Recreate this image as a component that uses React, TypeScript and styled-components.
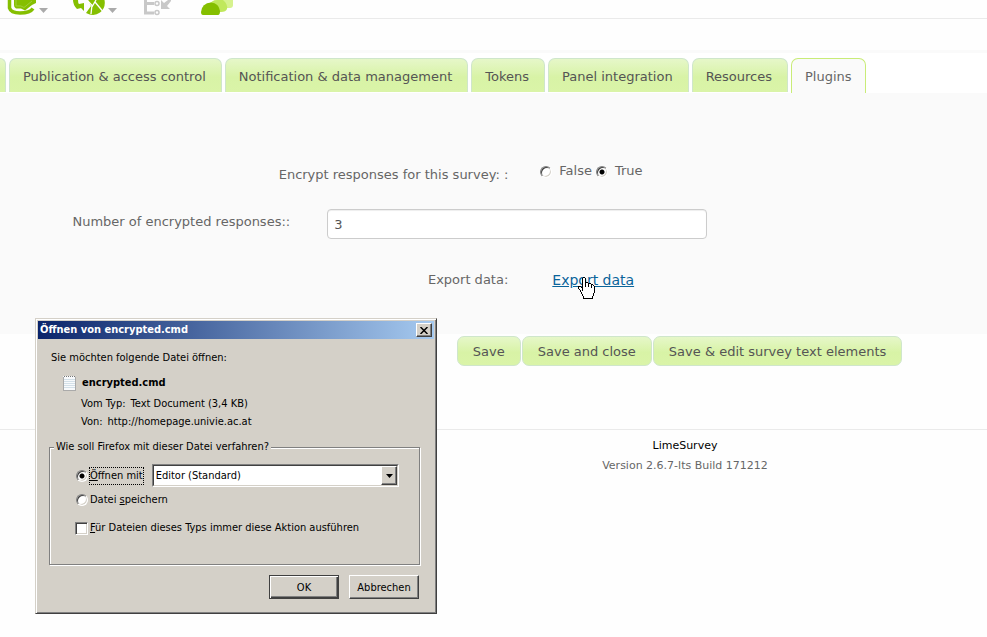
import React from "react";
import styled, { createGlobalStyle, css } from "styled-components";

const Global = createGlobalStyle`
  *, *::before, *::after { box-sizing: border-box; }
  body {
    margin: 0;
    background: #fefefe;
    color: #666;
    font-family: "DejaVu Sans", Verdana, sans-serif;
    font-size: 13px;
  }
`;

const Page = styled.div`
  position: relative;
  min-height: 100vh;
  overflow: hidden;
`;

const Toolbar = styled.header`
  display: flex;
  align-items: flex-end;
  height: 19px;
  padding-left: 7px;
  border-bottom: 1px solid #eaeaea;
`;

const Tool = styled.button<{ $gap: number }>`
  display: flex;
  align-items: flex-end;
  gap: 3px;
  height: 18px;
  margin: 0 ${(p) => p.$gap}px 0 0;
  padding: 0;
  border: 0;
  background: none;
  svg { display: block; }
`;

const SubBar = styled.div`
  height: 34px;
  border-bottom: 3px solid #fafafa;
`;

const Tabs = styled.nav`
  display: flex;
  gap: 3px;
  height: 40px;
  padding-top: 5px;
  overflow: hidden;
  background: #fff;
`;

const limeFill = css`
  border: 1px solid #cfe6cb;
  background: linear-gradient(#e6f7c9, #d8f3a6 55%, #daf4a8);
  color: #555;
`;

const Tab = styled.button<{ $active?: boolean }>`
  flex: none;
  height: 34px;
  padding: 2px 15px 0 13px;
  font: inherit;
  white-space: nowrap;
  ${limeFill}
  border-bottom: 0;
  border-radius: 7px 7px 0 0;
  ${(p) => p.$active && css`
    height: 35px;
    padding: 1px 13px 0;
    border-color: #c9ec78;
    background: #fafafa;
    color: #666;
  `}
`;

const TabEdge = styled(Tab)`
  width: 6px;
  padding: 0;
  border-left: 0;
  border-radius: 0 7px 0 0;
`;

const Panel = styled.main`
  padding: 66px 0 40px;
  background: #fafafa;
`;

const Row = styled.div<{ $after?: number }>`
  display: flex;
  align-items: center;
  min-height: 30px;
  margin-bottom: ${(p) => p.$after ?? 0}px;
`;

const RowLabel = styled.label<{ $short?: boolean }>`
  flex: none;
  width: ${(p) => (p.$short ? "29.4%" : "51.5%")};
  text-align: right;
  white-space: nowrap;
  padding-top: ${(p) => (p.$short ? 0 : 1)}px;
  padding-bottom: ${(p) => (p.$short ? 6 : 0)}px;
`;

const Choices = styled.div`
  display: flex;
  margin-left: 32px;
  gap: 4px;
  padding-bottom: 8px;
`;

const Choice = styled.label`
  display: flex;
  align-items: center;
  gap: 7px;
`;

const Radio = styled.input.attrs({ type: "radio" })<{ $low?: boolean }>`
  appearance: none;
  flex: none;
  width: 12px;
  height: 12px;
  margin: ${(p) => (p.$low ? "4px 0 0" : "0 0 0 1px")};
  border: 1px solid;
  border-color: #808080 #fff #fff #808080;
  border-radius: 50%;
  background: #fff;
  box-shadow: inset 1px 1px 0 #404040, inset -1px -1px 0 #d4d0c8;
  &:checked {
    background: radial-gradient(circle at center, #000 0 2px, #fff 3px);
  }
`;

const TextInput = styled.input`
  width: 38.5%;
  height: 30px;
  margin-left: 37px;
  padding: 1px 6px 0;
  border: 1px solid #ccc;
  border-radius: 4px;
  background: #fff;
  box-shadow: inset 0 1px 1px #eee;
  color: #555;
  font: inherit;
`;

const ExportLink = styled.a`
  position: relative;
  margin-left: 44px;
  padding-top: 1px;
  color: #0a649a;
  font-size: 14px;
`;

const Pointer = styled.svg`
  position: absolute;
  top: 6px;
  left: 26px;
`;

const Actions = styled.div`
  display: flex;
  justify-content: center;
  gap: 1px;
  padding: 2px 0 63px 37.7%;
`;

const LimeButton = styled.button`
  height: 30px;
  padding: 0 15px;
  ${limeFill}
  border-radius: 7px;
  font: inherit;
  white-space: nowrap;
`;

const Footer = styled.footer`
  padding: 9px 0 0 38.8%;
  border-top: 1px solid #eaeaea;
  font-size: 11px;
  line-height: 14px;
  text-align: center;
  p { margin: 0 0 6px; }
  a { color: #000; text-decoration: none; }
`;

const Dialog = styled.section`
  position: absolute;
  top: 318px;
  left: 35px;
  width: 402px;
  padding: 3px 3px 14px;
  border: 1px solid;
  border-color: #d4d0c8 #404040 #404040 #d4d0c8;
  box-shadow: inset 1px 1px 0 #fff, inset -1px -1px 0 #808080;
  background: #d4d0c8;
  color: #000;
  font-family: Tahoma, "DejaVu Sans Condensed", "DejaVu Sans", sans-serif;
  font-size: 11px;
  line-height: 14px;
`;

const TitleBar = styled.div`
  display: flex;
  align-items: center;
  justify-content: space-between;
  height: 18px;
  margin: -1px -1px 0;
  padding: 0 2px;
  background: linear-gradient(90deg, #0a246a, #a6caf0);
  color: #fff;
  font-weight: bold;
`;

const raised = css`
  border: 1px solid;
  border-color: #fff #404040 #404040 #fff;
  box-shadow: inset -1px -1px 0 #808080;
  background: #d4d0c8;
`;

const Close = styled.button`
  display: grid;
  place-items: center;
  width: 16px;
  height: 14px;
  padding: 0;
  ${raised}
`;

const DialogBody = styled.div`
  padding: 12px 13px 0 10px;
`;

const Intro = styled.p`
  margin: 0 2px 10px;
`;

const FileName = styled.div`
  display: flex;
  align-items: center;
  gap: 6px;
  margin-left: 14px;
  font-weight: bold;
`;

const Meta = styled.dl`
  display: flex;
  gap: 5px;
  margin: 0 0 4px 32px;
  dt, dd { margin: 0; }
`;

const Details = styled.div`
  padding: 6px 0 7px;
`;

const Group = styled.fieldset`
  height: 125px;
  margin: 0;
  padding: 10px 20px 0 25px;
  border: 1px solid #808080;
  box-shadow: 1px 1px 0 #fff, inset 1px 1px 0 #fff;
  legend {
    margin-left: -21px;
    padding: 0 2px;
    background: #d4d0c8;
    line-height: 14px;
  }
`;

const Option = styled.div<{ $after: number }>`
  display: flex;
  align-items: center;
  gap: 2px;
  margin-bottom: ${(p) => p.$after}px;
  white-space: nowrap;
`;

const FocusLabel = styled.label`
  padding: 1px 0;
  outline: 1px dotted #000;
`;

const SelectBox = styled.div`
  position: relative;
  flex: 1;
  margin-left: 7px;
  border: 1px solid;
  border-color: #808080 #fff #fff #808080;
  select {
    appearance: none;
    display: block;
    width: 100%;
    height: 21px;
    padding: 0 20px 0 2px;
    border: 1px solid;
    border-color: #404040 #d4d0c8 #d4d0c8 #404040;
    border-radius: 0;
    background: #fff;
    color: #000;
    font: inherit;
  }
`;

const Drop = styled.span`
  position: absolute;
  top: 1px;
  right: 1px;
  bottom: 1px;
  width: 16px;
  display: grid;
  place-items: center;
  pointer-events: none;
  ${raised}
`;

const Check = styled.input.attrs({ type: "checkbox" })`
  appearance: none;
  width: 13px;
  height: 13px;
  margin: 0;
  border: 1px solid;
  border-color: #808080 #fff #fff #808080;
  box-shadow: inset 1px 1px 0 #404040, inset -1px -1px 0 #d4d0c8;
  background: #fff;
`;

const DialogActions = styled.div`
  display: flex;
  justify-content: flex-end;
  gap: 10px;
  padding: 10px 1px 0 0;
`;

const DialogButton = styled.button<{ $primary?: boolean }>`
  width: 70px;
  height: 24px;
  padding: 1px 0 0;
  color: #000;
  font: inherit;
  ${raised}
  ${(p) => p.$primary && css`
    border-color: #404040;
    box-shadow: inset 1px 1px 0 #fff, inset -1px -1px 0 #404040, inset -2px -2px 0 #808080;
  `}
`;

const Caret = () => (
  <svg width="9" height="10"><path d="M0 0h9L4.500 5z" fill="#aaa" /></svg>
);

const DatabaseIcon = () => (
  <svg width="29" height="18" viewBox="0 0 29 18">
    <path d="M2.500 0V8Q4 13 13 13Q23 13 26 8.500" fill="none" stroke="#85bf00" strokeWidth="3.500" />
    <path d="M7 0H29V3L25 5L18 10.500L14 8.500H9Q7 8 7 5Z" fill="#85bf00" />
    <path d="M9 0V6H14L17 7.500L25 1" fill="none" stroke="#9fce3a" strokeWidth="1" />
  </svg>
);

const ResponsesIcon = () => (
  <svg width="32" height="18" viewBox="0 0 32 18">
    <path d="M0 0H5Q5 3 6 4L11 3V11L8 8L4 9Q0 5 0 0Z" fill="#85bf00" />
    <path d="M15 0H31.500Q33 8 27 12.500Q21 17 13 13L18 6Z" fill="#85bf00" />
    <path d="M14 0L19.500 6L23 0M19 5L18 14M22 2L29.500 11" fill="none" stroke="#fff" strokeWidth="1.300" />
  </svg>
);

const ImportIcon = () => (
  <svg width="27" height="18" viewBox="0 0 27 18" fill="none" stroke="#c8c8c8">
    <path d="M1.500 0V13H10M1 3.500H10" strokeWidth="3" />
    <circle cx="13" cy="3.500" r="2" strokeWidth="1.500" />
    <circle cx="13" cy="12.500" r="2" strokeWidth="1.500" />
    <path d="M17 0V9H26L23 6L27 1V0H24L20 3Z" fill="#c8c8c8" stroke="none" />
  </svg>
);

const CloudIcon = () => (
  <svg width="33" height="18" viewBox="0 0 33 18">
    <path d="M13 0H32V5Q32 8 29 8H16Z" fill="#d6f28e" />
    <path d="M9 3Q12 0 16 0H22Q27 4 26 9Q25 12 20 12H10Z" fill="#c0e85c" />
    <path d="M0 12Q1 3 10 2.500Q18 3 19 11Q19 15 17 15H2Q0 15 0 12Z" fill="#85bf00" />
  </svg>
);

const handRows = [
  ".....##..........",
  "....#oo#.........",
  "....#oo#.........",
  "....#oo#.........",
  "....#oo#.........",
  "....#oo###.......",
  "....#oo#oo###....",
  "....#oo#oo#oo##..",
  "....#oo#oo#oo#o#.",
  "###.#oo#oo#oo#oo#",
  "#oo##oooooooo#oo#",
  "#ooo#ooooooooooo#",
  ".#oo#ooooooooooo#",
  "..#o#ooooooooooo#",
  "..#ooooooooooooo#",
  "...#oooooooooooo#",
  "...#ooooooooooo#.",
  "....#oooooooooo#.",
  "....#oooooooooo#.",
  ".....#oooooooo#..",
  ".....#oooooooo#..",
  ".....##########..",
];

const pixels = (mark: string) =>
  handRows
    .flatMap((row, y) => [...row].map((c, x) => (c === mark ? `M${x} ${y}h1v1h-1z` : "")))
    .join("");

const HandPointer = () => (
  <Pointer width="17" height="22" shapeRendering="crispEdges" aria-hidden="true">
    <path d={pixels("o")} fill="#fff" />
    <path d={pixels("#")} fill="#000" />
  </Pointer>
);

const NoteIcon = () => (
  <svg width="13" height="16" viewBox="0 0 13 16" shapeRendering="crispEdges">
    <path d="M0 1H12V16H0Z" fill="#f8fafc" />
    <path d="M1 4.500H12M1 6.500H12M1 8.500H12M1 10.500H12M1 12.500H12" stroke="#d3e0e8" />
    <path d="M0.500 2V15.500H12.500V2" fill="none" stroke="#aaa" />
    <path d="M1 1.500H12" stroke="#777" strokeDasharray="1 1" />
  </svg>
);

const tabs = [
  "Publication & access control",
  "Notification & data management",
  "Tokens",
  "Panel integration",
  "Resources",
  "Plugins",
];

export default function App() {
  return (
    <Page>
      <Global />
      <Toolbar>
        <Tool $gap={25} aria-label="Database"><DatabaseIcon /><Caret /></Tool>
        <Tool $gap={27} aria-label="Responses"><ResponsesIcon /><Caret /></Tool>
        <Tool $gap={30} aria-label="Import"><ImportIcon /></Tool>
        <Tool $gap={0} aria-label="Themes"><CloudIcon /></Tool>
      </Toolbar>
      <SubBar />
      <Tabs>
        <TabEdge aria-label="Previous tab" />
        {tabs.map((t) => <Tab key={t} $active={t === "Plugins"}>{t}</Tab>)}
      </Tabs>
      <Panel>
        <Row $after={20}>
          <RowLabel as="span">Encrypt responses for this survey: :</RowLabel>
          <Choices>
            <Choice><Radio $low name="encrypt" />False</Choice>
            <Choice><Radio $low name="encrypt" defaultChecked />True</Choice>
          </Choices>
        </Row>
        <Row $after={25}>
          <RowLabel $short htmlFor="count">Number of encrypted responses::</RowLabel>
          <TextInput id="count" defaultValue="3" />
        </Row>
        <Row>
          <RowLabel as="span">Export data:</RowLabel>
          <ExportLink href="#export">Export data<HandPointer /></ExportLink>
        </Row>
      </Panel>
      <Actions>
        <LimeButton>Save</LimeButton>
        <LimeButton>Save and close</LimeButton>
        <LimeButton>Save &amp; edit survey text elements</LimeButton>
      </Actions>
      <Footer>
        <p><a href="#limesurvey">LimeSurvey</a></p>
        <p>Version 2.6.7-lts Build 171212</p>
      </Footer>

      <Dialog role="dialog" aria-labelledby="dialog-title">
        <TitleBar>
          <span id="dialog-title">Öffnen von encrypted.cmd</span>
          <Close aria-label="Schließen">
            <svg width="8" height="7"><path d="M0.500 0L7.500 7M7.500 0L0.500 7" stroke="#000" strokeWidth="1.500" /></svg>
          </Close>
        </TitleBar>
        <DialogBody>
          <Intro>Sie möchten folgende Datei öffnen:</Intro>
          <FileName><NoteIcon />encrypted.cmd</FileName>
          <Details>
            <Meta><dt>Vom Typ:</dt><dd>Text Document (3,4 KB)</dd></Meta>
            <Meta><dt>Von:</dt><dd>http://homepage.univie.ac.at</dd></Meta>
          </Details>
          <Group>
            <legend>Wie soll Firefox mit dieser Datei verfahren?</legend>
            <Option $after={6}>
              <Radio id="open" name="action" defaultChecked />
              <FocusLabel htmlFor="open"><u>Ö</u>ffnen mit</FocusLabel>
              <SelectBox>
                <select aria-label="Programm"><option>Editor (Standard)</option></select>
                <Drop><svg width="7" height="4"><path d="M0 0h7L3.500 4z" /></svg></Drop>
              </SelectBox>
            </Option>
            <Option $after={14}>
              <Radio id="save" name="action" />
              <label htmlFor="save">Datei <u>s</u>peichern</label>
            </Option>
            <Option $after={0}>
              <Check id="always" />
              <label htmlFor="always"><u>F</u>ür Dateien dieses Typs immer diese Aktion ausführen</label>
            </Option>
          </Group>
          <DialogActions>
            <DialogButton $primary>OK</DialogButton>
            <DialogButton>Abbrechen</DialogButton>
          </DialogActions>
        </DialogBody>
      </Dialog>
    </Page>
  );
}
